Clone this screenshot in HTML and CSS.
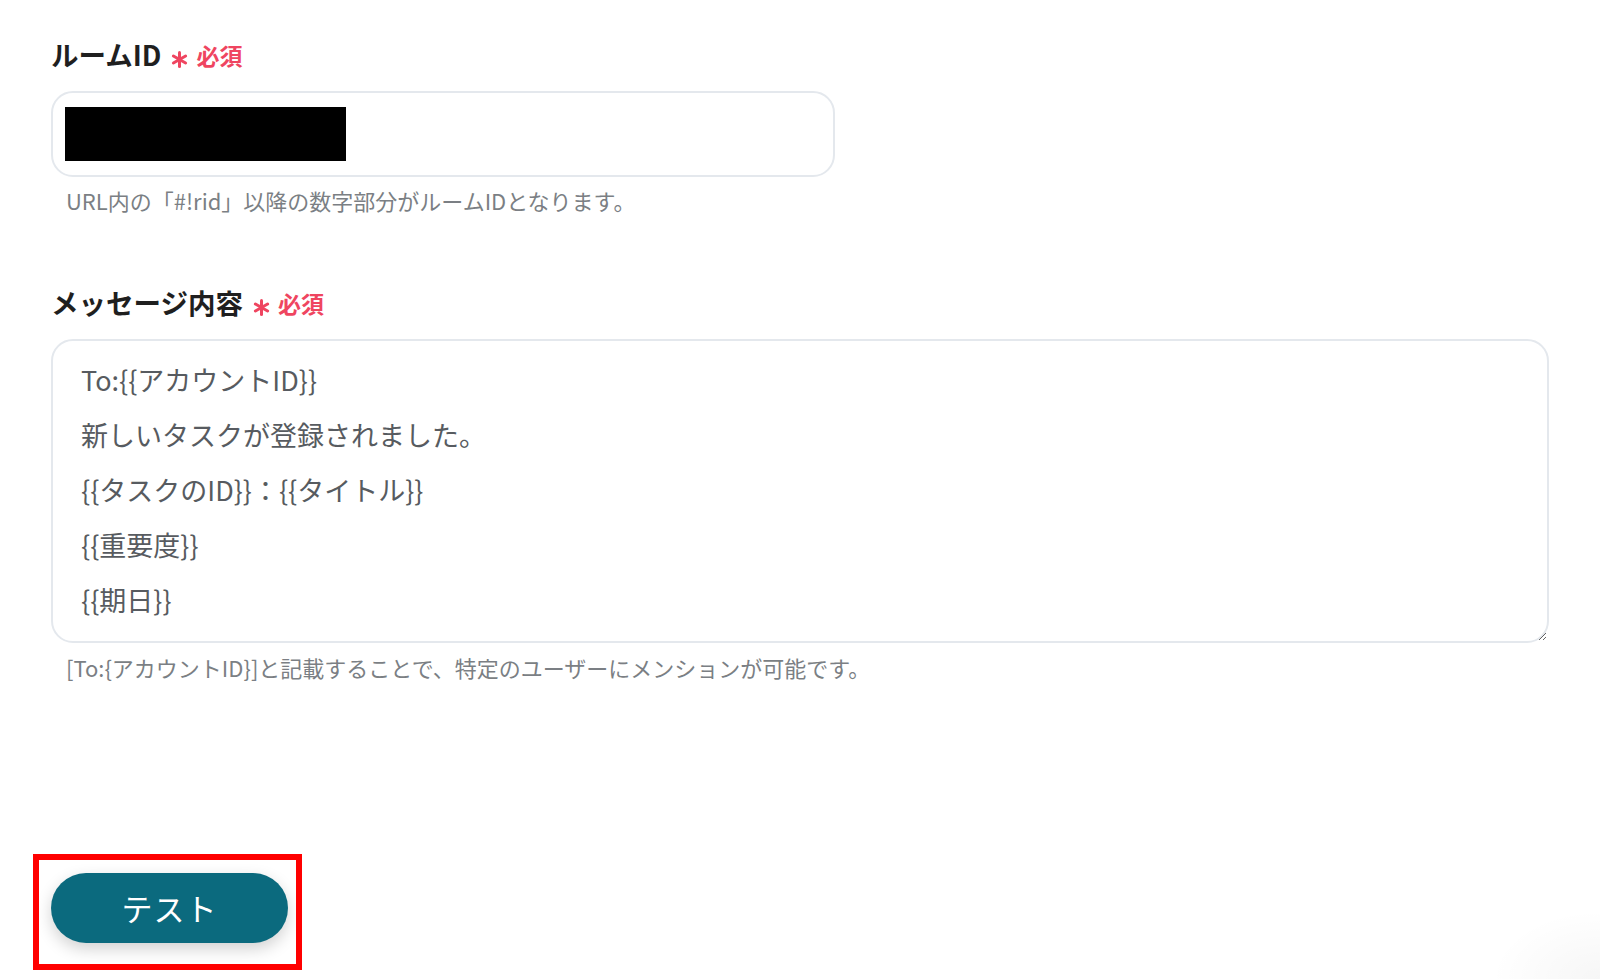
FILE: index.html
```html
<!DOCTYPE html>
<html lang="ja">
<head>
<meta charset="utf-8">
<title>フォーム</title>
<link rel="stylesheet" href="styles.css">
</head>
<body>
<div class="page">
  <div class="label-row label-row--first">
    <span class="label">ルームID</span>
    <svg class="req-star" width="17" height="17" viewBox="0 0 17 17" aria-hidden="true"><g stroke="#ef4560" stroke-width="3" stroke-linecap="round"><line x1="8.5" y1="1.5" x2="8.5" y2="15.5"/><line x1="2.4" y1="5" x2="14.6" y2="12"/><line x1="2.4" y1="12" x2="14.6" y2="5"/></g></svg>
    <span class="req-text">必須</span>
  </div>
  <div class="input-box">
    <div class="redacted"></div>
  </div>
  <p class="help help--first">URL内の「#!rid」以降の数字部分がルームIDとなります。</p>

  <div class="label-row label-row--second">
    <span class="label">メッセージ内容</span>
    <svg class="req-star" width="17" height="17" viewBox="0 0 17 17" aria-hidden="true"><g stroke="#ef4560" stroke-width="3" stroke-linecap="round"><line x1="8.5" y1="1.5" x2="8.5" y2="15.5"/><line x1="2.4" y1="5" x2="14.6" y2="12"/><line x1="2.4" y1="12" x2="14.6" y2="5"/></g></svg>
    <span class="req-text">必須</span>
  </div>
  <textarea class="message" readonly>To:{{アカウントID}}
新しいタスクが登録されました。
{{タスクのID}}：{{タイトル}}
{{重要度}}
{{期日}}</textarea>
  <p class="help help--second">[To:{アカウントID}]と記載することで、特定のユーザーにメンションが可能です。</p>

  <div class="actions">
    <button class="test-btn" type="button">テスト</button>
  </div>
</div>
<div class="highlight"></div>
<div class="corner-shade"></div>
</body>
</html>
```
FILE: styles.css
```css
html, body {
  margin: 0;
  padding: 0;
  background: #ffffff;
}
body {
  width: 1600px;
  height: 979px;
  overflow: hidden;
  position: relative;
  font-family: "Noto Sans CJK JP", "Noto Sans", sans-serif;
}
.page {
  display: flex;
  flex-direction: column;
  align-items: flex-start;
  padding: 37px 0 0 51px;
}
.label-row {
  display: flex;
  align-items: center;
  height: 34px;
}
.label-row--first {
  margin-bottom: 2px;
}
.label-row--second {
  margin-top: 71px;
  margin-bottom: 1px;
}
.label {
  font-size: 27.5px;
  font-weight: 700;
  color: #1f1f1f;
  line-height: 34px;
}
.req-star {
  display: block;
  margin-left: 10px;
  position: relative;
  top: 5px;
}
.req-text {
  color: #ef4560;
  font-size: 23px;
  font-weight: 700;
  line-height: 34px;
  margin-left: 8px;
  position: relative;
  top: 1px;
}
.input-box {
  box-sizing: border-box;
  width: 784px;
  height: 86px;
  margin-top: 18px;
  border: 2px solid #e4e8ed;
  border-radius: 22px;
  display: flex;
  align-items: center;
  padding-left: 12px;
}
.redacted {
  width: 281px;
  height: 54px;
  background: #000000;
}
.help {
  margin: 0;
  font-size: 22px;
  line-height: 28px;
  color: #7b7f84;
  padding-left: 15px;
}
.help--first {
  margin-top: 9px;
}
.help--second {
  margin-top: 10px;
}
.message {
  box-sizing: border-box;
  display: block;
  width: 1498px;
  height: 304px;
  margin: 19px 0 0 0;
  border: 2px solid #e4e8ed;
  border-radius: 22px;
  padding: 11px 28px 14px 28px;
  font-family: "Noto Sans CJK JP", "Noto Sans", sans-serif;
  font-size: 27px;
  line-height: 55px;
  color: #575b60;
  background: #ffffff;
  resize: both;
  overflow: hidden;
  outline: none;
}
.actions {
  margin-top: 192px;
}
.test-btn {
  display: flex;
  align-items: center;
  justify-content: center;
  width: 237px;
  height: 70px;
  border: none;
  border-radius: 35px;
  background: #0b6a7e;
  color: #ffffff;
  font-family: "Noto Sans CJK JP", "Noto Sans", sans-serif;
  font-size: 31px;
  font-weight: 400;
  letter-spacing: 1px;
  box-shadow: 0 6px 16px rgba(0, 0, 0, 0.18);
  padding: 0 0 2px 0;
}
.highlight {
  position: absolute;
  left: 33px;
  top: 854px;
  width: 269px;
  height: 116px;
  box-sizing: border-box;
  border: 6px solid #ff0000;
  pointer-events: none;
}
.corner-shade {
  position: absolute;
  right: 0;
  bottom: 0;
  width: 110px;
  height: 70px;
  background: radial-gradient(ellipse at 100% 100%, rgba(0,0,0,0.035), rgba(0,0,0,0) 70%);
  pointer-events: none;
}
```
